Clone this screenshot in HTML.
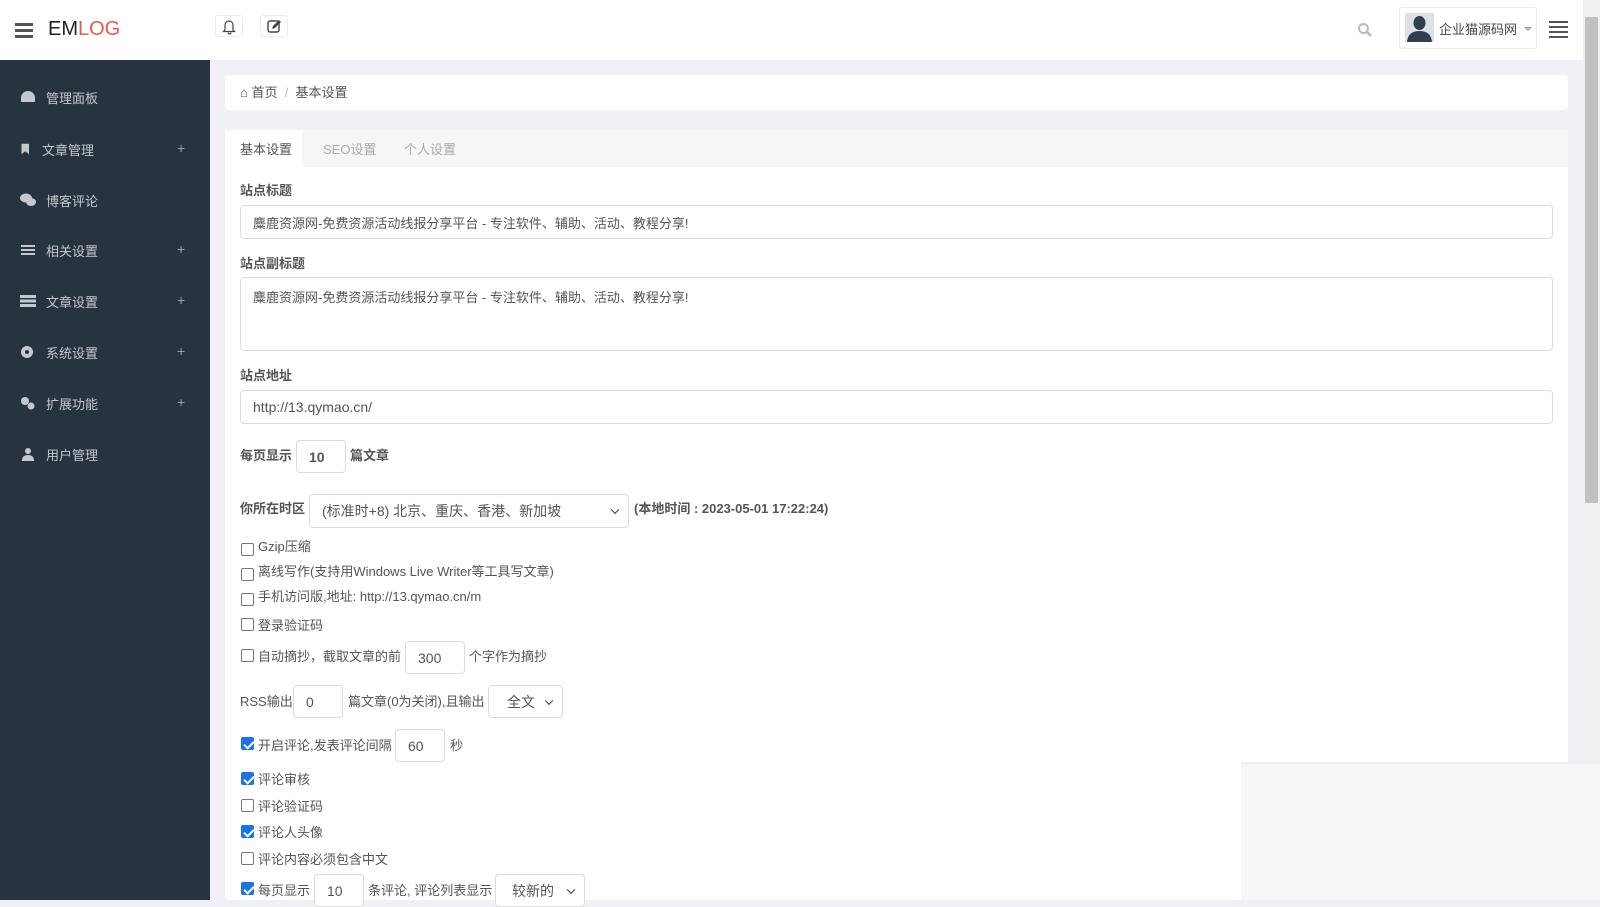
<!DOCTYPE html>
<html><head><meta charset="utf-8"><style>
*{box-sizing:border-box;margin:0;padding:0}
body{width:1600px;height:900px;overflow:hidden;background:#f0f1f6;font-family:"Liberation Sans","Noto Sans CJK SC",sans-serif;color:#555;position:relative}
.a{position:absolute}
#hdr{left:0;top:0;width:1583px;height:60px;background:#fff}
#side{left:0;top:60px;width:210px;height:840px;background:#283340}
.si{position:absolute;left:20px;color:#c4c8cc;font-size:13px;display:flex;align-items:center;gap:10px;height:20px}
.si svg{width:16px;height:14px;fill:#c4c8cc}
.plus{position:absolute;left:177px;color:#9aa0a6;font-size:14px}
.card{left:225px;width:1343px;background:#fff;border-radius:4px}
.lbl{font-size:13px;font-weight:bold;color:#555}
.inp{position:absolute;border:1px solid #dcdcdc;border-radius:4px;background:#fff;font-size:14px;color:#555;padding-left:12px;display:flex;align-items:center}
.t{position:absolute;font-size:13px;color:#555;white-space:nowrap}
.cb{position:absolute;width:13px;height:13px;border:1px solid #777;border-radius:2px;background:#fff}
.cb.on{background:#1a73e8;border-color:#1a73e8}
.cb.on:after{content:"";position:absolute;left:3.5px;top:0.5px;width:4px;height:8px;border:solid #fff;border-width:0 2px 2px 0;transform:rotate(45deg)}
.sel:after{content:"";position:absolute;right:10px;top:50%;width:5px;height:5px;border:solid #333;border-width:0 1.5px 1.5px 0;transform:translateY(-70%) rotate(45deg)}
</style></head><body>
<div id="hdr" class="a"></div>
<div class="a" style="left:15px;top:23px;width:18px;height:2.5px;background:#555;box-shadow:0 6px 0 #555,0 12px 0 #555"></div>
<div class="a" style="left:48px;top:18px;font-size:20px;color:#222">EM<span style="color:#e8584f">LOG</span></div>
<div class="a" style="left:215px;top:15px;width:28px;height:22px;border:1px solid #eee;border-radius:3px"><svg width="26" height="20" viewBox="0 0 26 20"><path d="M9 14 V9 a4 4 0 0 1 8 0 V14 L18.5 15.5 H7.5 Z M12 16.5 a1.5 1.5 0 0 0 3 0" fill="none" stroke="#444" stroke-width="1.2"/></svg></div>
<div class="a" style="left:260px;top:15px;width:28px;height:22px;border:1px solid #eee;border-radius:3px"><svg width="26" height="20" viewBox="0 0 26 20"><rect x="7" y="5" width="11" height="11" rx="2" fill="none" stroke="#444" stroke-width="1.4"/><path d="M11 13 l1-3 6-6 2 2-6 6z" fill="#444"/></svg></div>
<svg class="a" style="left:1357px;top:22px" width="16" height="16" viewBox="0 0 16 16"><circle cx="6.5" cy="6.5" r="4.5" fill="none" stroke="#bbb" stroke-width="2"/><path d="M10 10 L14 14" stroke="#bbb" stroke-width="2.5"/></svg>
<div class="a" style="left:1399px;top:7px;width:138px;height:42px;border:1px solid #eee;border-radius:3px"></div>
<svg class="a" style="left:1405px;top:13px" width="29" height="29" viewBox="0 0 29 29"><rect width="29" height="29" fill="#dde1e6"/><ellipse cx="14.5" cy="10" rx="6" ry="7" fill="#2f3e50"/><path d="M2 29 Q3 18 14.5 18 Q26 18 27 29Z" fill="#2f3e50"/></svg>
<div class="a" style="left:1439px;top:19px;font-size:13px;color:#444">企业猫源码网</div>
<div class="a" style="left:1524px;top:27px;border:4px solid transparent;border-top-color:#aaa"></div>
<div class="a" style="left:1549px;top:21px;width:19px;height:2px;background:#555;box-shadow:0 5px 0 #555,0 10px 0 #555,0 15px 0 #555"></div>
<div class="a" style="left:1583px;top:0;width:17px;height:900px;background:#f0f0f0"></div>
<div class="a" style="left:1585px;top:17px;width:13px;height:486px;background:#c1c1c1"></div>

<div id="side" class="a">
<div class="si" style="top:27px"><svg viewBox="0 0 16 14"><path d="M8 1a7 7 0 0 0-7 7v4h14V8a7 7 0 0 0-7-7z"/></svg>管理面板</div>
<div class="si" style="top:79px"><svg viewBox="0 0 16 14" style="width:12px"><path d="M2 0h10v14l-5-4-5 4z"/></svg>文章管理</div><div class="plus" style="top:80px">+</div>
<div class="si" style="top:130px"><svg viewBox="0 0 16 14"><ellipse cx="6" cy="5" rx="6" ry="4.5"/><ellipse cx="11" cy="9" rx="5" ry="4"/></svg>博客评论</div>
<div class="si" style="top:180px"><svg viewBox="0 0 16 14"><path d="M1 2h14v2H1zM1 6h14v2H1zM1 10h14v2H1z"/></svg>相关设置</div><div class="plus" style="top:181px">+</div>
<div class="si" style="top:231px"><svg viewBox="0 0 16 14"><path d="M0 1h16v3H0zM0 5.5h16v3H0zM0 10h16v3H0z"/></svg>文章设置</div><div class="plus" style="top:232px">+</div>
<div class="si" style="top:282px"><svg viewBox="0 0 16 14"><circle cx="7" cy="7" r="6"/><circle cx="7" cy="7" r="2" fill="#283340"/></svg>系统设置</div><div class="plus" style="top:283px">+</div>
<div class="si" style="top:333px"><svg viewBox="0 0 16 14"><circle cx="5" cy="5" r="4"/><circle cx="11" cy="10" r="3.5"/></svg>扩展功能</div><div class="plus" style="top:334px">+</div>
<div class="si" style="top:384px"><svg viewBox="0 0 16 14"><circle cx="8" cy="4" r="3"/><path d="M2 14q0-6 6-6t6 6z"/></svg>用户管理</div>
</div>

<div class="a card" style="top:75px;height:35px"></div>
<div class="a" style="left:240px;top:82px;font-size:13px;color:#555"><span style="color:#456">&#8962;</span> 首页 &nbsp;<span style="color:#bbb">/</span>&nbsp; 基本设置</div>

<div class="a card" style="top:130px;height:770px"></div>
<div class="a" style="left:225px;top:130px;width:1343px;height:37px;background:#f6f6f6"></div>
<div class="a" style="left:225px;top:130px;width:77px;height:37px;background:#fff"></div>
<div class="a" style="left:240px;top:139px;font-size:13px;color:#555">基本设置</div>
<div class="a" style="left:323px;top:139px;font-size:13px;color:#aaa">SEO设置</div>
<div class="a" style="left:404px;top:139px;font-size:13px;color:#aaa">个人设置</div>

<div class="a lbl" style="left:240px;top:180px">站点标题</div>
<div class="inp" style="left:240px;top:205px;width:1313px;height:34px;font-size:13px">麋鹿资源网-免费资源活动线报分享平台 - 专注软件、辅助、活动、教程分享!</div>
<div class="a lbl" style="left:240px;top:253px">站点副标题</div>
<div class="inp" style="left:240px;top:277px;width:1313px;height:74px;font-size:13px;align-items:flex-start;padding-top:9px">麋鹿资源网-免费资源活动线报分享平台 - 专注软件、辅助、活动、教程分享!</div>
<div class="a lbl" style="left:240px;top:365px">站点地址</div>
<div class="inp" style="left:240px;top:390px;width:1313px;height:34px">http://13.qymao.cn/</div>

<div class="t lbl" style="left:240px;top:445px">每页显示</div>
<div class="inp" style="left:296px;top:440px;width:50px;height:33px;font-weight:bold">10</div>
<div class="t lbl" style="left:350px;top:445px">篇文章</div>

<div class="t lbl" style="left:240px;top:498px">你所在时区</div>
<div class="inp sel" style="left:309px;top:494px;width:320px;height:34px">(标准时+8) 北京、重庆、香港、新加坡</div>
<div class="t lbl" style="left:634px;top:498px">(本地时间 : 2023-05-01 17:22:24)</div>

<div class="cb" style="left:241px;top:543px"></div><div class="t" style="left:258px;top:536px">Gzip压缩</div>
<div class="cb" style="left:241px;top:568px"></div><div class="t" style="left:258px;top:561px">离线写作(支持用Windows Live Writer等工具写文章)</div>
<div class="cb" style="left:241px;top:593px"></div><div class="t" style="left:258px;top:586px">手机访问版,地址: http://13.qymao.cn/m</div>
<div class="cb" style="left:241px;top:618px"></div><div class="t" style="left:258px;top:615px">登录验证码</div>
<div class="cb" style="left:241px;top:649px"></div><div class="t" style="left:258px;top:646px">自动摘抄，截取文章的前</div>
<div class="inp" style="left:405px;top:641px;width:60px;height:33px">300</div>
<div class="t" style="left:469px;top:646px">个字作为摘抄</div>

<div class="t" style="left:240px;top:691px">RSS输出</div>
<div class="inp" style="left:293px;top:685px;width:50px;height:33px">0</div>
<div class="t" style="left:348px;top:691px">篇文章(0为关闭),且输出</div>
<div class="inp sel" style="left:488px;top:685px;width:75px;height:33px;padding-left:18px">全文</div>

<div class="cb on" style="left:241px;top:737px"></div><div class="t" style="left:258px;top:735px">开启评论,发表评论间隔</div>
<div class="inp" style="left:395px;top:729px;width:50px;height:33px">60</div>
<div class="t" style="left:450px;top:735px">秒</div>
<div class="cb on" style="left:241px;top:772px"></div><div class="t" style="left:258px;top:769px">评论审核</div>
<div class="cb" style="left:241px;top:799px"></div><div class="t" style="left:258px;top:796px">评论验证码</div>
<div class="cb on" style="left:241px;top:825px"></div><div class="t" style="left:258px;top:822px">评论人头像</div>
<div class="cb" style="left:241px;top:852px"></div><div class="t" style="left:258px;top:849px">评论内容必须包含中文</div>
<div class="cb on" style="left:241px;top:882px"></div><div class="t" style="left:258px;top:880px">每页显示</div>
<div class="inp" style="left:314px;top:874px;width:50px;height:33px">10</div>
<div class="t" style="left:368px;top:880px">条评论, 评论列表显示</div>
<div class="inp sel" style="left:495px;top:874px;width:90px;height:33px;padding-left:16px">较新的</div>

<div class="a" style="left:1241px;top:762px;width:359px;height:138px;background:#f7f7f9;border-top:2px solid #f1f1f4"></div>
</body></html>
